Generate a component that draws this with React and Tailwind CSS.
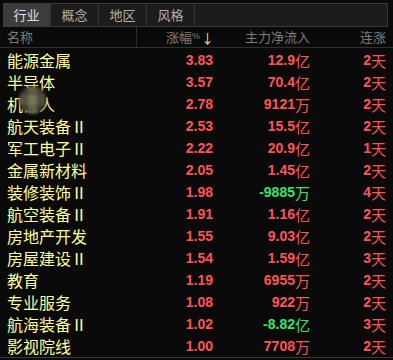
import React from "react";

const tabs = ["行业", "概念", "地区", "风格"];

// name, change, flow, flow unit, days
const rows = [
    ["能源金属", "3.83", "12.9", "亿", "2"],
    ["半导体", "3.57", "70.4", "亿", "2"],
    ["机器人", "2.78", "9121", "万", "2"],
    ["航天装备Ⅱ", "2.53", "15.5", "亿", "2"],
    ["军工电子Ⅱ", "2.22", "20.9", "亿", "1"],
    ["金属新材料", "2.05", "1.45", "亿", "2"],
    ["装修装饰Ⅱ", "1.98", "-9885", "万", "4"],
    ["航空装备Ⅱ", "1.91", "1.16", "亿", "2"],
    ["房地产开发", "1.55", "9.03", "亿", "2"],
    ["房屋建设Ⅱ", "1.54", "1.59", "亿", "3"],
    ["教育", "1.19", "6955", "万", "2"],
    ["专业服务", "1.08", "922", "万", "2"],
    ["航海装备Ⅱ", "1.02", "-8.82", "亿", "3"],
    ["影视院线", "1.00", "7708", "万", "2"],
];

const cjk = { fontFamily: '"Noto Sans CJK SC", sans-serif' };
const num = { fontFamily: '"Liberation Sans", Arial, sans-serif' };

// mosaic tones for the blurred part of the third name
const mosaic = ["#3c3c30", "#5c5c44", "#44443a", "#55553f", "#74745a", "#4e4e3e", "#3e3e32", "#606048", "#3a3a30"];

const Name = ({ text }) => {
    if (text === "机器人") {
        return (
            <span className="relative">
                机器人
                <span className="absolute left-[12px] top-[-6px] w-[27px] h-[28px] rounded-full overflow-hidden grid grid-cols-3 blur-[1.5px]">
                    {mosaic.map((c, i) => (
                        <span key={i} style={{ backgroundColor: c }}></span>
                    ))}
                </span>
            </span>
        );
    }
    return <span>{text}</span>;
};

export default function App() {
    return (
        <div className="w-[393px] h-[360px] bg-[#0a0a0a] pt-[3px] overflow-hidden select-none">
            {/* tab bar */}
            <div className="flex h-[24px] ml-[3px] mr-[5px] border-t border-[#3d3d3d] border-b border-b-[#3a3a3a] bg-[#1c1c1c]" style={cjk}>
                {tabs.map((t, i) => (
                    <div
                        key={t}
                        className={`w-[48px] flex items-center justify-center text-[13px] border-r border-[#333] ${i === 0 ? "bg-[#3c3c3c] text-[#e0e0e0]" : "text-[#b0b0b0]"}`}
                    >
                        {t}
                    </div>
                ))}
                <div className="flex-1 border-r border-[#333]"></div>
            </div>

            {/* header */}
            <div className="flex h-[21px] items-center border-b border-[#303030] text-[13px] text-[#7c7c7c]" style={cjk}>
                <div className="w-[137px] h-full flex items-center pl-[7px] border-r border-[#2c2c2c]">名称</div>
                <div className="w-[77px] flex items-center justify-end">
                    涨幅<span className="text-[9px]" style={num}>%</span>
                    <span className="text-[#f0e68c] text-[13px] leading-none ml-[1px]">↓</span>
                </div>
                <div className="w-[96px] text-right">主力净流入</div>
                <div className="w-[76px] text-right">连涨</div>
            </div>

            {/* rows */}
            <div className="pt-[1px] border-b border-[#3a3a3a]">
                {rows.map(([name, chg, flow, unit, days]) => {
                    const neg = flow.startsWith("-");
                    return (
                        <div key={name} className="flex h-[22px] items-center">
                            <div className="w-[137px] pl-[7px] text-[16px] text-[#ffff9a] leading-[22px]" style={cjk}>
                                <Name text={name} />
                            </div>
                            <div className="w-[76px] text-right text-[14px] font-bold text-[#ff5454]" style={num}>{chg}</div>
                            <div className={`w-[97px] text-right flex items-center justify-end ${neg ? "text-[#3ee06a]" : "text-[#ff5454]"}`}>
                                <span className="text-[14px] font-bold" style={num}>{flow}</span>
                                <span className="text-[15px] leading-none" style={cjk}>{unit}</span>
                            </div>
                            <div className="w-[76px] flex items-center justify-end text-[#ff5454]">
                                <span className="text-[14px] font-bold" style={num}>{days}</span>
                                <span className="text-[15px] leading-none" style={cjk}>天</span>
                            </div>
                        </div>
                    );
                })}
            </div>
        </div>
    );
}
